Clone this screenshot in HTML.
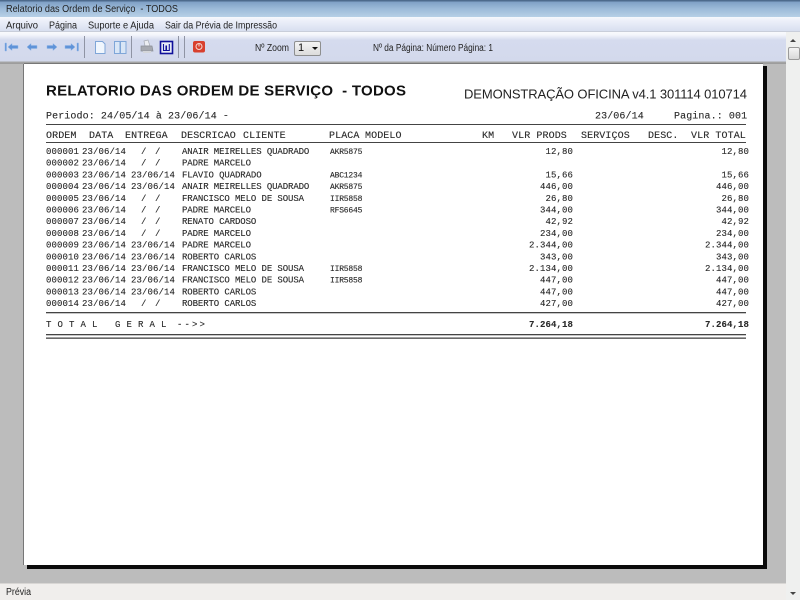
<!DOCTYPE html>
<html lang="pt">
<head>
<meta charset="utf-8">
<title>Relatorio das Ordem de Serviço - TODOS</title>
<style>
html,body{margin:0;padding:0;width:800px;height:600px;overflow:hidden;background:#bcbcbc;font-family:"Liberation Sans",sans-serif}
.a{position:absolute}
#title{left:0;top:0;width:800px;height:17px;background:linear-gradient(#4d6a8c 0,#4d6a8c 1px,#7fa0c6 2px,#9dbbd9 9px,#b7d0e6 17px)}
#menu{left:0;top:17px;width:800px;height:15px;background:linear-gradient(#f6f8fc 0,#eef1fa 3px,#d8dff0 14px,#b9bcc4 15px)}
#tool{left:0;top:32px;width:786px;height:32px;background:linear-gradient(#f9fafd 0,#f3f5fb 3px,#d5dbee 8px,#d3d9ec 29px,#a6a6a6 30px,#9a9a9a 32px)}
#scroll{left:786px;top:32px;width:14px;height:568px;background:#eff0ef}
#thumb{left:788px;top:47px;width:10px;height:11px;background:linear-gradient(#f4f4f4,#d8d8d8);border:1px solid #9a9a9a;border-radius:2px}
#status{left:0;top:583px;width:786px;height:17px;background:#f0eeec;border-top:1px solid #d8d6d4;box-sizing:border-box}
#page{left:24px;top:64px;width:739px;height:501px;background:#fff;box-shadow:-1px 0 0 #777,0 -1px 0 #777}
#sr{left:763px;top:66px;width:4px;height:503px;background:#0a0a0a}
#sb{left:27px;top:565px;width:740px;height:4px;background:#0a0a0a}
#combo{left:294px;top:41px;width:27px;height:15px;box-sizing:border-box;border:1px solid #8e8f8f;border-radius:2px;background:linear-gradient(#f4f4f4,#dcdcdc);font-size:11px;line-height:13px;padding-left:3px;color:#111}
svg{position:absolute;left:0;top:0}
.c{font-family:"Liberation Sans",sans-serif;font-size:10px;fill:#222}
.m{font-family:"Liberation Mono",monospace;fill:#2a2a2a;stroke:#2a2a2a;stroke-width:.12}
.h{font-size:10px;letter-spacing:.1px}
.r{font-size:9px;letter-spacing:.1px;white-space:pre}
.n{letter-spacing:-.1px}
.p{font-size:8px;letter-spacing:-.2px}
.e{text-anchor:end}
</style>
</head>
<body>
<div id="title" class="a"></div>
<div id="menu" class="a"></div>
<div id="tool" class="a"></div>
<div id="scroll" class="a"></div>
<div id="thumb" class="a"></div>
<div id="status" class="a"></div>
<div id="sr" class="a"></div>
<div id="sb" class="a"></div>
<div id="page" class="a"></div>
<div id="combo" class="a">1</div>

<svg width="800" height="600" viewBox="0 0 800 600">
  <!-- chrome text -->
  <text class="c" x="6" y="12" textLength="172" lengthAdjust="spacingAndGlyphs" xml:space="preserve">Relatorio das Ordem de Serviço  - TODOS</text>
  <text class="c" x="6" y="28.500" textLength="32" lengthAdjust="spacingAndGlyphs">Arquivo</text>
  <text class="c" x="49" y="28.500" textLength="28" lengthAdjust="spacingAndGlyphs">Página</text>
  <text class="c" x="88" y="28.500" textLength="66" lengthAdjust="spacingAndGlyphs">Suporte e Ajuda</text>
  <text class="c" x="165" y="28.500" textLength="112" lengthAdjust="spacingAndGlyphs">Sair da Prévia de Impressão</text>
  <text class="c" x="255" y="51" textLength="34" lengthAdjust="spacingAndGlyphs">Nº Zoom</text>
  <text class="c" x="373" y="51" textLength="120" lengthAdjust="spacingAndGlyphs">Nº da Página: Número Página: 1</text>
  <text class="c" x="6" y="595" textLength="25" lengthAdjust="spacingAndGlyphs">Prévia</text>

  <!-- combo arrow -->
  <path d="M312 47h6l-3 3z" fill="#111"/>
  <!-- scroll arrows -->
  <path d="M790 42h6l-3-3z" fill="#444"/>
  <path d="M790 592h6l-3 3z" fill="#444"/>
  <!-- toolbar arrows -->
  <g fill="#5f93d8" stroke="#8fb4e6" stroke-width=".5">
    <path d="M5 43h1.500v8H5z"/><path d="M8 47l4-3.500v2h6v3h-6v2z"/>
    <path d="M27 47l4-3.500v2h6v3h-6v2z"/>
    <path d="M57 47l-4-3.500v2h-6v3h6v2z"/>
    <path d="M75 47l-4-3.500v2h-6v3h6v2z"/><path d="M77 43h1.500v8H77z"/>
  </g>
  <!-- separators -->
  <g fill="#8f94a4">
    <rect x="84" y="36" width="1" height="22"/>
    <rect x="131" y="36" width="1" height="22"/>
    <rect x="178" y="36" width="1" height="22"/>
    <rect x="184" y="36" width="1" height="22"/>
  </g>
  <!-- page icon -->
  <path d="M95.500 41.500h7l2.500 2.500v9.500h-9.500z" fill="#f0f6fd" stroke="#7fa6d8"/>
  <!-- double page -->
  <path d="M114.500 41.500h5.500v12h-5.500zM120.500 41.500h5.500v12h-5.500z" fill="#d9e6f6" stroke="#7fa6d8"/>
  <!-- printer -->
  <path d="M144 41l4-1 2 6h-5z" fill="#eceef2" stroke="#a6aab2" stroke-width=".7"/>
  <path d="M141 46h11l1 5h-12z" fill="#a6a9b0" stroke="#8a8e96" stroke-width=".7"/>
  <rect x="143" y="51" width="8" height="2" fill="#d4d6da"/>
  <!-- W icon -->
  <rect x="160.500" y="41.500" width="12" height="12" fill="#e8ecf6" stroke="#10109a" stroke-width="1.600"/>
  <path d="M163.500 44v6.500h2.500V45.500M166.500 45.500v5h2.800V44" fill="none" stroke="#10109a" stroke-width="1.100"/>
  <!-- red icon -->
  <rect x="193" y="41" width="12" height="11.500" rx="2" fill="#d8402e"/>
  <circle cx="199" cy="46.500" r="3" fill="none" stroke="#f5d8d0" stroke-width="1"/>
  <path d="M199 43.500v3" stroke="#f5d8d0" stroke-width="1"/>

  <!-- report heading -->
  <text x="46" y="95.300" textLength="360" lengthAdjust="spacing" font-family="Liberation Sans" font-weight="700" font-size="15" fill="#111" xml:space="preserve">RELATORIO DAS ORDEM DE SERVIÇO  - TODOS</text>
  <text x="464" y="98.500" textLength="283" lengthAdjust="spacing" font-family="Liberation Sans" font-size="13" fill="#222">DEMONSTRAÇÃO OFICINA v4.1 301114 010714</text>

  <g class="m h">
    <text x="46" y="118.500">Periodo: 24/05/14 à 23/06/14 -</text>
    <text x="595" y="118.500">23/06/14</text>
    <text x="674" y="118.500">Pagina.: 001</text>
    <text x="46" y="138">ORDEM</text>
    <text x="89" y="138">DATA</text>
    <text x="125" y="138">ENTREGA</text>
    <text x="181" y="138">DESCRICAO</text>
    <text x="243" y="138">CLIENTE</text>
    <text x="329" y="138">PLACA</text>
    <text x="365" y="138">MODELO</text>
    <text x="482" y="138">KM</text>
    <text x="512" y="138">VLR PRODS</text>
    <text x="581" y="138">SERVIÇOS</text>
    <text x="648" y="138">DESC.</text>
    <text x="691" y="138">VLR TOTAL</text>
  </g>

  <g fill="#444">
    <rect x="46" y="124" width="700" height="1"/>
    <rect x="46" y="142" width="700" height="1"/>
    <rect x="46" y="312" width="700" height="1.300"/>
    <rect x="46" y="334" width="700" height="1.300"/>
    <rect x="46" y="337.500" width="700" height="1.300"/>
  </g>

  <g class="m r">
    <text x="46" y="154">000001</text><text x="82" y="154">23/06/14</text><text x="141 155" y="154">//</text><text class="n" x="182" y="154">ANAIR MEIRELLES QUADRADO</text><text class="p" x="330" y="154">AKR5875</text><text class="e" x="573" y="154">12,80</text><text class="e" x="749" y="154">12,80</text>
    <text x="46" y="165.700">000002</text><text x="82" y="165.700">23/06/14</text><text x="141 155" y="165.700">//</text><text class="n" x="182" y="165.700">PADRE MARCELO</text>
    <text x="46" y="177.400">000003</text><text x="82" y="177.400">23/06/14</text><text x="131" y="177.400">23/06/14</text><text class="n" x="182" y="177.400">FLAVIO QUADRADO</text><text class="p" x="330" y="177.400">ABC1234</text><text class="e" x="573" y="177.400">15,66</text><text class="e" x="749" y="177.400">15,66</text>
    <text x="46" y="189.100">000004</text><text x="82" y="189.100">23/06/14</text><text x="131" y="189.100">23/06/14</text><text class="n" x="182" y="189.100">ANAIR MEIRELLES QUADRADO</text><text class="p" x="330" y="189.100">AKR5875</text><text class="e" x="573" y="189.100">446,00</text><text class="e" x="749" y="189.100">446,00</text>
    <text x="46" y="200.800">000005</text><text x="82" y="200.800">23/06/14</text><text x="141 155" y="200.800">//</text><text class="n" x="182" y="200.800">FRANCISCO MELO DE SOUSA</text><text class="p" x="330" y="200.800">IIR5858</text><text class="e" x="573" y="200.800">26,80</text><text class="e" x="749" y="200.800">26,80</text>
    <text x="46" y="212.500">000006</text><text x="82" y="212.500">23/06/14</text><text x="141 155" y="212.500">//</text><text class="n" x="182" y="212.500">PADRE MARCELO</text><text class="p" x="330" y="212.500">RFS6645</text><text class="e" x="573" y="212.500">344,00</text><text class="e" x="749" y="212.500">344,00</text>
    <text x="46" y="224.200">000007</text><text x="82" y="224.200">23/06/14</text><text x="141 155" y="224.200">//</text><text class="n" x="182" y="224.200">RENATO CARDOSO</text><text class="e" x="573" y="224.200">42,92</text><text class="e" x="749" y="224.200">42,92</text>
    <text x="46" y="235.900">000008</text><text x="82" y="235.900">23/06/14</text><text x="141 155" y="235.900">//</text><text class="n" x="182" y="235.900">PADRE MARCELO</text><text class="e" x="573" y="235.900">234,00</text><text class="e" x="749" y="235.900">234,00</text>
    <text x="46" y="247.600">000009</text><text x="82" y="247.600">23/06/14</text><text x="131" y="247.600">23/06/14</text><text class="n" x="182" y="247.600">PADRE MARCELO</text><text class="e" x="573" y="247.600">2.344,00</text><text class="e" x="749" y="247.600">2.344,00</text>
    <text x="46" y="259.300">000010</text><text x="82" y="259.300">23/06/14</text><text x="131" y="259.300">23/06/14</text><text class="n" x="182" y="259.300">ROBERTO CARLOS</text><text class="e" x="573" y="259.300">343,00</text><text class="e" x="749" y="259.300">343,00</text>
    <text x="46" y="271">000011</text><text x="82" y="271">23/06/14</text><text x="131" y="271">23/06/14</text><text class="n" x="182" y="271">FRANCISCO MELO DE SOUSA</text><text class="p" x="330" y="271">IIR5858</text><text class="e" x="573" y="271">2.134,00</text><text class="e" x="749" y="271">2.134,00</text>
    <text x="46" y="282.700">000012</text><text x="82" y="282.700">23/06/14</text><text x="131" y="282.700">23/06/14</text><text class="n" x="182" y="282.700">FRANCISCO MELO DE SOUSA</text><text class="p" x="330" y="282.700">IIR5858</text><text class="e" x="573" y="282.700">447,00</text><text class="e" x="749" y="282.700">447,00</text>
    <text x="46" y="294.400">000013</text><text x="82" y="294.400">23/06/14</text><text x="131" y="294.400">23/06/14</text><text class="n" x="182" y="294.400">ROBERTO CARLOS</text><text class="e" x="573" y="294.400">447,00</text><text class="e" x="749" y="294.400">447,00</text>
    <text x="46" y="306.100">000014</text><text x="82" y="306.100">23/06/14</text><text x="141 155" y="306.100">//</text><text class="n" x="182" y="306.100">ROBERTO CARLOS</text><text class="e" x="573" y="306.100">427,00</text><text class="e" x="749" y="306.100">427,00</text>
    <text x="46" y="327" xml:space="preserve" style="letter-spacing:.35px">T O T A L   G E R A L</text>
    <text x="177" y="327" textLength="28" lengthAdjust="spacing">--&gt;&gt;</text>
    <text class="e" x="573" y="327" font-weight="700">7.264,18</text>
    <text class="e" x="749" y="327" font-weight="700">7.264,18</text>
  </g>
</svg>
</body>
</html>
